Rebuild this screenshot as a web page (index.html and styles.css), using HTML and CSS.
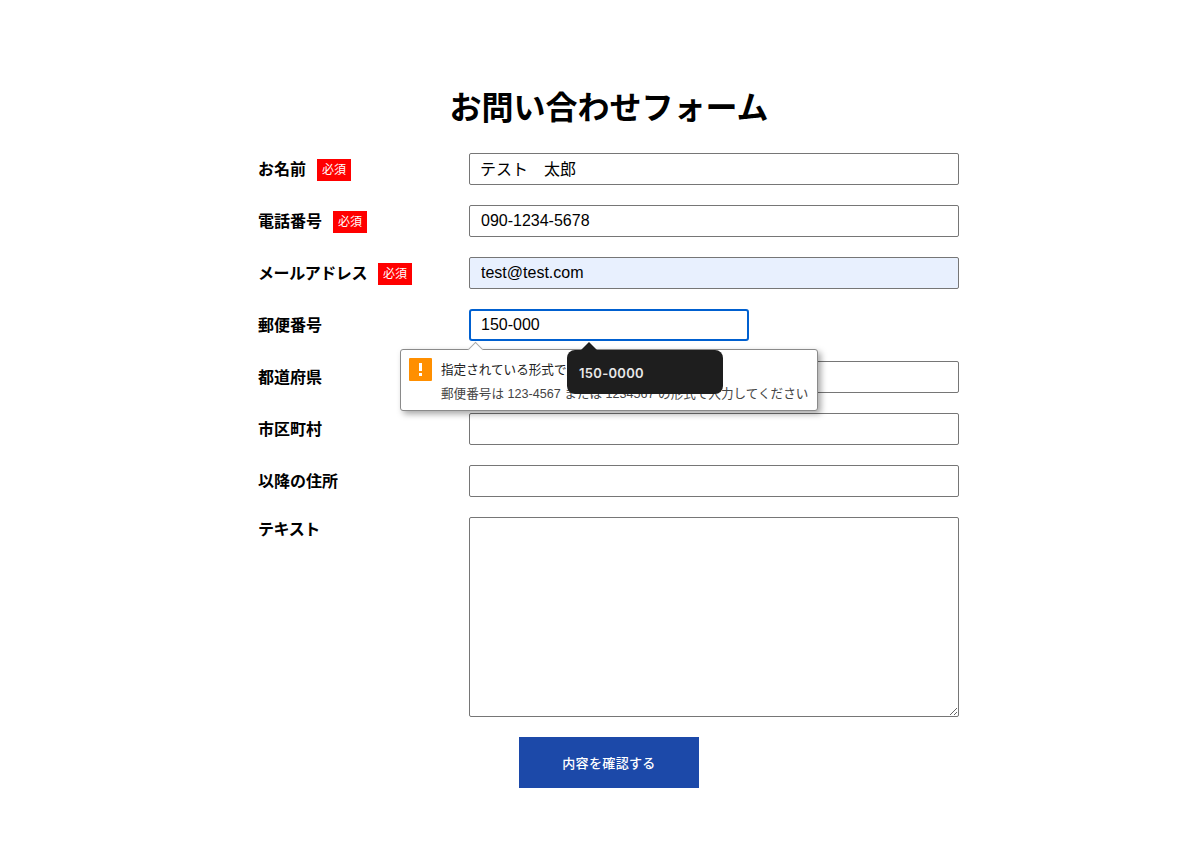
FILE: index.html
```html
<!DOCTYPE html>
<html lang="ja">
<head>
<meta charset="UTF-8">
<title>お問い合わせフォーム</title>
<link rel="stylesheet" href="styles.css">
</head>
<body>

<main class="contact">
  <h1 class="title">お問い合わせフォーム</h1>

  <form class="form">
    <div class="row">
      <label class="label">お名前<span class="required">必須</span></label>
      <input class="field name" type="text" value="テスト　太郎">
    </div>
    <div class="row">
      <label class="label">電話番号<span class="required">必須</span></label>
      <input class="field" type="text" value="090-1234-5678">
    </div>
    <div class="row">
      <label class="label"><span class="kana">メールアドレス</span><span class="required">必須</span></label>
      <input class="field autofilled" type="text" value="test@test.com">
    </div>
    <div class="row zip-row">
      <label class="label">郵便番号</label>
      <input class="field zip" type="text" value="150-000">

      <!-- validation bubble -->
      <div class="bubble">
        <span class="bubble-arrow"></span>
        <svg class="bubble-icon" width="23" height="23" viewBox="0 0 23 23">
          <rect width="23" height="23" rx="1" fill="#ff8f00"/>
          <rect x="10" y="5" width="3" height="8" fill="#fff"/>
          <rect x="10" y="15" width="3" height="3" fill="#fff"/>
        </svg>
        <div class="bubble-text">
          <p class="bubble-title">指定されている形式で入力してください</p>
          <p class="bubble-sub">郵便番号は 123-4567 または 1234567 の形式で入力してください</p>
        </div>
      </div>

      <!-- autocomplete hint -->
      <div class="hint">150-0000</div>
    </div>
    <div class="row">
      <label class="label">都道府県</label>
      <input class="field" type="text">
    </div>
    <div class="row">
      <label class="label">市区町村</label>
      <input class="field" type="text">
    </div>
    <div class="row">
      <label class="label">以降の住所</label>
      <input class="field" type="text">
    </div>
    <div class="row row-top">
      <label class="label"><span class="kana">テキスト</span></label>
      <textarea class="field area"></textarea>
    </div>
    <button class="submit" type="button">内容を確認する</button>
  </form>
</main>

</body>
</html>
```

FILE: styles.css
```css
body {
  margin: 0;
  background: #fff;
  color: #000;
  font-family: "Liberation Sans", "Noto Sans CJK JP", sans-serif;
}
.contact {
  width: 700px;
  margin-left: 259px;
  padding-top: 87px;
}
.title {
  margin: 0 0 24px;
  font-size: 32px;
  line-height: 42px;
  font-weight: bold;
  text-align: center;
}
.form {
  display: flex;
  flex-direction: column;
  gap: 20px;
}
.row {
  display: flex;
  align-items: center;
  position: relative;
}
.row-top {
  align-items: flex-start;
}
.zip-row {
  z-index: 1;
}
.label {
  display: flex;
  align-items: center;
  box-sizing: border-box;
  width: 211px;
  height: 32px;
  margin-left: -1px;
  padding-bottom: 2px;
  flex-shrink: 0;
  font-size: 16px;
  font-weight: bold;
}
.row-top .label {
  height: 24px;
}
.kana {
  letter-spacing: -0.43px;
}
.required {
  width: 34px;
  height: 22px;
  margin-left: 11px;
  margin-top: 4px;
  background: #f00;
  color: #fff;
  font-size: 12px;
  font-weight: normal;
  line-height: 22px;
  text-align: center;
}
.field {
  box-sizing: border-box;
  width: 490px;
  height: 32px;
  padding: 0 11px;
  border: 1px solid #767676;
  border-radius: 2px;
  background: #fff;
  color: #000;
  font-family: inherit;
  font-size: 16px;
}
.name {
  padding: 0 10px 2px;
}
.autofilled {
  background: #e8f0fe;
}
.zip {
  width: 280px;
  border: 2px solid #0060d0;
  border-radius: 3px;
  padding: 0 10px;
}
.area {
  height: 200px;
  padding: 8px 11px;
}
.submit {
  width: 180px;
  height: 51px;
  margin-left: 260px;
  border: none;
  background: #1c49a9;
  color: #fff;
  font-family: inherit;
  font-size: 13px;
  font-weight: 500;
  letter-spacing: 0.35px;
}

/* validation popup, sits over the rows below */
.bubble {
  position: absolute;
  top: 40px;
  left: 141px;
  box-sizing: border-box;
  display: flex;
  gap: 9px;
  width: 418px;
  height: 62px;
  padding: 8px;
  background: #fff;
  border: 1px solid #8a8a8a;
  border-radius: 3px;
  box-shadow: 3px 3px 6px rgba(0,0,0,0.35);
}
.bubble-arrow {
  position: absolute;
  top: -6px;
  left: 69px;
  width: 10px;
  height: 10px;
  background: #fff;
  border-top: 1px solid #aaa;
  border-left: 1px solid #aaa;
  transform: rotate(45deg);
}
.bubble-icon {
  flex-shrink: 0;
}
.bubble-text {
  font-size: 12.6px;
  line-height: 18px;
}
.bubble-title {
  margin: 3px 0 6px;
  color: #222;
}
.bubble-sub {
  margin: 0;
  color: #444;
  white-space: nowrap;
}
.hint {
  position: absolute;
  top: 41px;
  left: 308px;
  box-sizing: border-box;
  width: 156px;
  height: 44px;
  padding: 1px 12px 0;
  background: #1e1e1e;
  border-radius: 8px;
  color: #e8e8e8;
  font-family: Inter, "Liberation Sans", sans-serif;
  font-size: 13px;
  font-weight: 600;
  letter-spacing: 0.3px;
  line-height: 44px;
}
.hint::before {
  content: "";
  position: absolute;
  top: -8px;
  left: 14px;
  border-left: 8px solid transparent;
  border-right: 8px solid transparent;
  border-bottom: 8px solid #1e1e1e;
}
```
